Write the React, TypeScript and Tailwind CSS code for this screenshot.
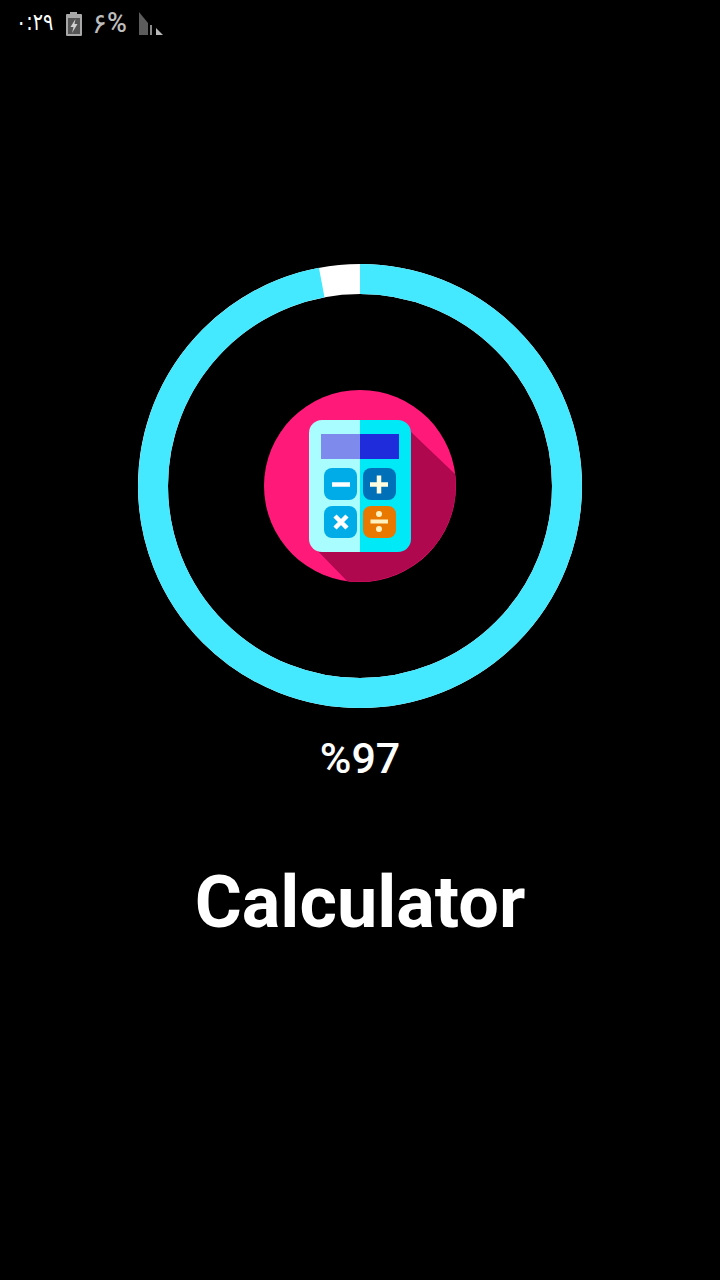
function StatusBar() {
  return (
    <div className="flex h-[48px] items-center pl-[16px] pb-[1px] font-['DejaVu_Sans',sans-serif]">
      <span className="w-[39px]">
        <span dir="ltr" className="inline-block origin-left scale-x-[0.8] text-[24px] leading-none font-medium whitespace-nowrap text-white">۰:۲۹</span>
      </span>
      <svg className="ml-[9px] h-[26px] w-[20px]" viewBox="0 0 20 26">
        <path d="M6 1h7v2h4a1 1 0 0 1 1 1v20a1 1 0 0 1-1 1H3a1 1 0 0 1-1-1V4a1 1 0 0 1 1-1h3z" fill="#a8a8a8" />
        <rect x="4" y="7" width="12" height="16" fill="#555" />
        <path d="M11.500 8 6.500 16h3l-1.500 6 5.500-9h-3z" fill="#d0d0d0" />
      </svg>
      <span className="ml-[8px] flex w-[35px] items-center leading-none text-[#bdbdbd]">
        <span className="w-[15px] text-[28px]">۶</span>
        <span className="font-['Roboto',sans-serif] text-[27px] font-medium">%</span>
      </span>
      <svg className="ml-[11px] h-[26px] w-[28px]" viewBox="0 0 28 26">
        <path d="M1 1 10 12V24H1z" fill="#5c5c5c" />
        <path d="M12 14h2v10h-2z" fill="#8a8a8a" />
        <path d="M18 17 25 24H18z" fill="#b8b8b8" />
      </svg>
    </div>
  );
}

function CalculatorIcon() {
  return (
    <svg className="h-[192px] w-[192px]" viewBox="0 0 192 192">
      <circle cx="96" cy="96" r="96" fill="#ff1a7a" />
      <path d="M146 41 191 84A96 96 0 0 1 83 191L45 152z" fill="#b0084f" />
      <path d="M96 30H58a13 13 0 0 0-13 13v106a13 13 0 0 0 13 13h38z" fill="#aafdff" />
      <path d="M96 30h38a13 13 0 0 1 13 13v106a13 13 0 0 1-13 13H96z" fill="#00e9f6" />
      <rect x="57" y="44" width="39" height="25" fill="#7e8aec" />
      <rect x="96" y="44" width="39" height="25" fill="#1f2cdc" />
      <rect x="60" y="78" width="33" height="32" rx="8" fill="#00ace8" />
      <rect x="99" y="78" width="33" height="32" rx="8" fill="#0070b8" />
      <rect x="60" y="116" width="33" height="32" rx="8" fill="#00ace8" />
      <rect x="99" y="116" width="33" height="32" rx="8" fill="#e87800" />
      <path d="M68 94.500h18" stroke="#ffffff" strokeWidth="4.500" />
      <path d="M106 94.500h18M115 85.500v18" stroke="#fffde0" strokeWidth="4.500" />
      <path d="M71 126 83 138M83 126 71 138" stroke="#ffffff" strokeWidth="4.500" />
      <path d="M106.500 131.500h17.500" stroke="#fff2c0" strokeWidth="4" />
      <circle cx="115" cy="124" r="3" fill="#fff2c0" />
      <circle cx="115" cy="139" r="3" fill="#fff2c0" />
    </svg>
  );
}

function ProgressRing({ value }: { value: number }) {
  const r = 207;
  const circumference = 2 * Math.PI * r;
  return (
    <div className="relative flex h-[444px] w-[444px] items-center justify-center">
      <svg className="absolute inset-0 h-[444px] w-[444px] -rotate-90" viewBox="0 0 444 444">
        <circle cx="222" cy="222" r={r} fill="none" stroke="#ffffff" strokeWidth="30" />
        <circle
          cx="222"
          cy="222"
          r={r}
          fill="none"
          stroke="#44e9ff"
          strokeWidth="30"
          strokeDasharray={`${(circumference * value) / 100} ${circumference}`}
        />
      </svg>
      <CalculatorIcon />
    </div>
  );
}

export default function App() {
  return (
    <main className="h-[1280px] w-[720px] overflow-hidden bg-black font-['Roboto',sans-serif] text-white">
      <StatusBar />
      <section className="flex flex-col items-center pt-[216px]">
        <ProgressRing value={97} />
        <p className="mt-[26px] text-[43px] leading-[48px] font-medium">%97</p>
        <h1 className="mt-[79px] text-[72px] leading-[84px] font-bold">Calculator</h1>
      </section>
    </main>
  );
}
